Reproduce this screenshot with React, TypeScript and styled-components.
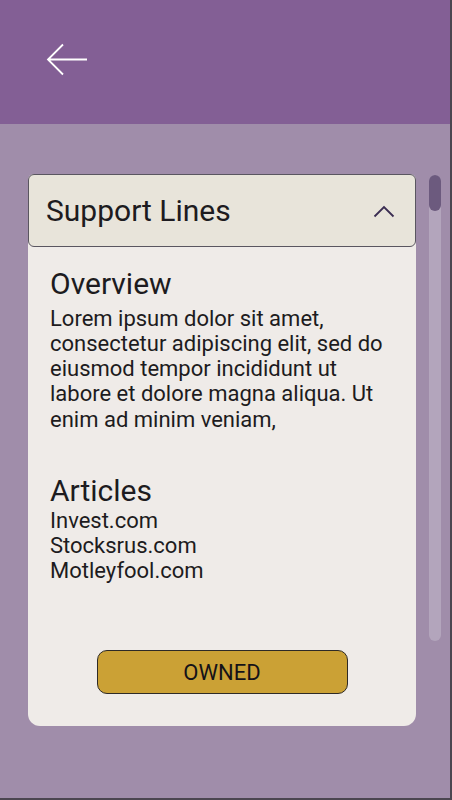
import React from "react";
import styled, { createGlobalStyle } from "styled-components";

const Global = createGlobalStyle`
  html, body { margin: 0; padding: 0; }
  body { font-family: Roboto, "Noto Sans", sans-serif; background: #a08daa; }
`;

const Page = styled.div`
  width: 452px;
  height: 800px;
  box-sizing: border-box;
  display: flex;
  flex-direction: column;
  background: #a08daa;
  border-right: 2px solid #4b4650;
  border-bottom: 2px solid #4b4650;
  overflow: hidden;
`;

const Header = styled.header`
  height: 124px;
  flex: none;
  background: #835f95;
  display: flex;
  align-items: center;
  padding-left: 46px;
`;

const BackButton = styled.button`
  background: none;
  border: none;
  padding: 0;
  margin-top: -5px;
  width: 42px;
  height: 34px;
  display: flex;
  align-items: center;
  justify-content: center;
  cursor: pointer;
`;

const Content = styled.main`
  flex: 1;
  display: flex;
  align-items: flex-start;
  padding: 50px 0 0 28px;
  gap: 13px;
`;

const Card = styled.section`
  width: 388px;
  height: 552px;
  flex: none;
  background: #efebe8;
  border-radius: 6px 6px 12px 12px;
  display: flex;
  flex-direction: column;
`;

const CardHeader = styled.div`
  height: 73px;
  box-sizing: border-box;
  background: #e8e4da;
  border: 1px solid #5a5660;
  border-radius: 6px;
  display: flex;
  align-items: center;
  justify-content: space-between;
  padding: 0 20px 0 17px;
`;

const CardTitle = styled.h2`
  margin: 0;
  font-weight: 400;
  font-size: 30px;
  line-height: 34px;
  color: #1d1b20;
`;

const CardBody = styled.div`
  flex: 1;
  display: flex;
  flex-direction: column;
  padding: 20px 22px 32px 22px;
`;

const SectionTitle = styled.h3<{ $gap?: number }>`
  margin: ${(p) => p.$gap ?? 0}px 0 0 0;
  font-weight: 400;
  font-size: 30px;
  line-height: 34.5px;
  color: #1d1b20;
`;

const Paragraph = styled.p`
  margin: 4px 0 0 0;
  font-size: 22px;
  line-height: 25.3px;
  color: #1d1b20;
`;

const LinkList = styled.ul`
  list-style: none;
  margin: 0;
  padding: 0;
  font-size: 22px;
  line-height: 25px;
  color: #1d1b20;
`;

const ButtonRow = styled.div`
  margin-top: auto;
  display: flex;
  justify-content: center;
`;

const OwnedButton = styled.button`
  width: 251px;
  height: 44px;
  background: #cba135;
  border: 1px solid #2e2a26;
  border-radius: 10px;
  font-family: Roboto, "Noto Sans", sans-serif;
  font-size: 22px;
  color: #141218;
  padding: 0;
`;

const Track = styled.div`
  width: 12px;
  height: 466px;
  margin-top: 1px;
  border-radius: 6px;
  background: #b3a5bc;
  flex: none;
  display: flex;
  flex-direction: column;
`;

const Thumb = styled.div`
  height: 36px;
  border-radius: 6px;
  background: #6c5a7e;
`;

export default function App() {
  return (
    <>
      <Global />
      <Page>
        <Header>
          <BackButton aria-label="Back">
            <svg width="42" height="34" viewBox="0 0 42 34" fill="none">
              <path
                d="M41 16.5H2M17 1.5L2 16.5L17 31.5"
                stroke="#ffffff"
                strokeWidth="1.8"
              />
            </svg>
          </BackButton>
        </Header>
        <Content>
          <Card>
            <CardHeader>
              <CardTitle>Support Lines</CardTitle>
              <svg width="22" height="14" viewBox="0 0 22 14" fill="none">
                <path d="M1.5 12.5L11 3L20.5 12.5" stroke="#3b2d52" strokeWidth="1.8" />
              </svg>
            </CardHeader>
            <CardBody>
              <SectionTitle>Overview</SectionTitle>
              <Paragraph>
                Lorem ipsum dolor sit amet, consectetur adipiscing elit, sed do eiusmod tempor
                incididunt ut labore et dolore magna aliqua. Ut enim ad minim veniam,
              </Paragraph>
              <SectionTitle $gap={42}>Articles</SectionTitle>
              <LinkList>
                <li>Invest.com</li>
                <li>Stocksrus.com</li>
                <li>Motleyfool.com</li>
              </LinkList>
              <ButtonRow>
                <OwnedButton>OWNED</OwnedButton>
              </ButtonRow>
            </CardBody>
          </Card>
          <Track>
            <Thumb />
          </Track>
        </Content>
      </Page>
    </>
  );
}
